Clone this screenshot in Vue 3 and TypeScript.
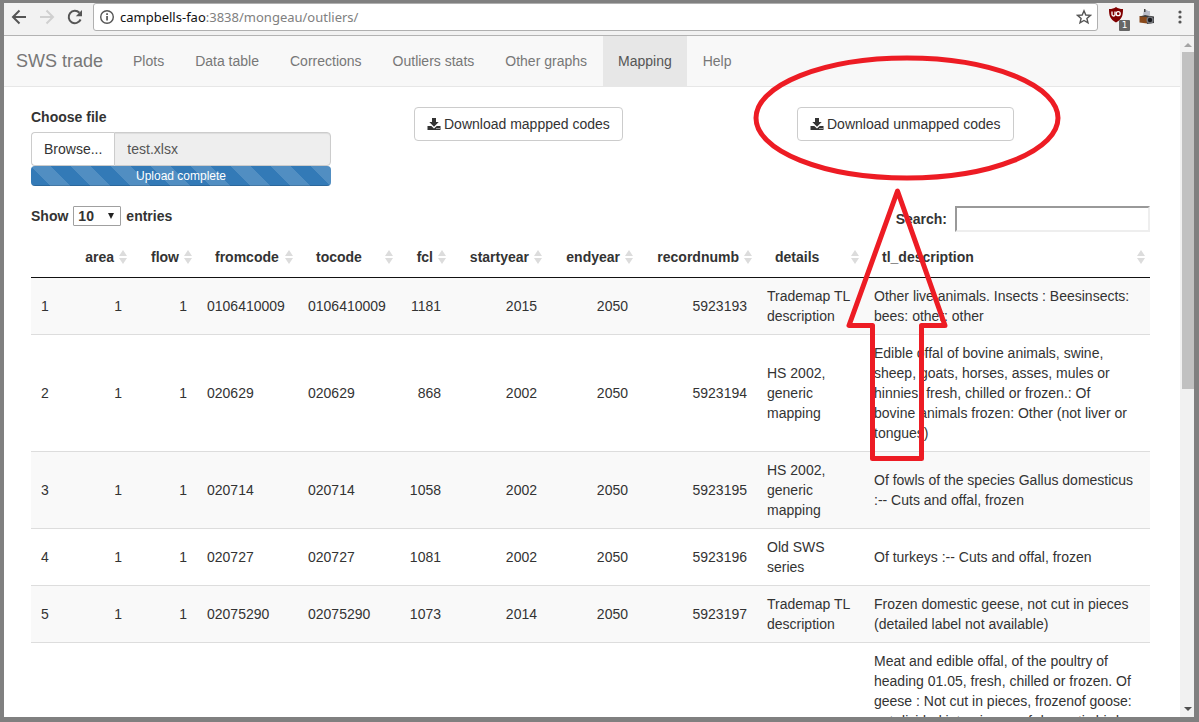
<script setup lang="ts">
import { ref } from 'vue'

interface Column {
  key: string
  width: number
  numeric?: boolean
}

interface Row {
  id: string
  cells: string[]
}

const navItems = ['Plots', 'Data table', 'Corrections', 'Outliers stats', 'Other graphs', 'Mapping', 'Help']
const active = ref('Mapping')
const pageSize = ref('10')
const search = ref('')
const progress = ref(100)

const columns: Column[] = [
  { key: 'area', width: 65, numeric: true },
  { key: 'flow', width: 65, numeric: true },
  { key: 'fromcode', width: 101 },
  { key: 'tocode', width: 100 },
  { key: 'fcl', width: 53, numeric: true },
  { key: 'startyear', width: 96, numeric: true },
  { key: 'endyear', width: 91, numeric: true },
  { key: 'recordnumb', width: 119, numeric: true },
  { key: 'details', width: 107 },
  { key: 'tl_description', width: 0 },
]

const rows: Row[] = [
  { id: '1', cells: ['1', '1', '0106410009', '0106410009', '1181', '2015', '2050', '5923193', 'Trademap TL description', 'Other live animals. Insects : Beesinsects: bees: other: other'] },
  { id: '2', cells: ['1', '1', '020629', '020629', '868', '2002', '2050', '5923194', 'HS 2002, generic mapping', 'Edible offal of bovine animals, swine, sheep, goats, horses, asses, mules or hinnies, fresh, chilled or frozen.: Of\nbovine animals frozen: Other (not liver or tongues)'] },
  { id: '3', cells: ['1', '1', '020714', '020714', '1058', '2002', '2050', '5923195', 'HS 2002, generic mapping', 'Of fowls of the species Gallus domesticus :-- Cuts and offal, frozen'] },
  { id: '4', cells: ['1', '1', '020727', '020727', '1081', '2002', '2050', '5923196', 'Old SWS series', 'Of turkeys :-- Cuts and offal, frozen'] },
  { id: '5', cells: ['1', '1', '02075290', '02075290', '1073', '2014', '2050', '5923197', 'Trademap TL description', 'Frozen domestic geese, not cut in pieces (detailed label not available)'] },
  { id: '', cells: ['', '', '', '', '', '', '', '', '', 'Meat and edible offal, of the poultry of heading 01.05, fresh, chilled or frozen. Of geese : Not cut in pieces, frozenof goose: not divided into pieces, of domestic bird'] },
]
</script>

<template>
  <div class="frame">
    <div class="toolbar">
      <button class="tool" type="button" aria-label="Back">
        <svg width="16" height="16" viewBox="0 0 16 16"><path d="M15 8H2.500M8.500 1.500 2 8l6.500 6.500" fill="none" stroke="#555" stroke-width="2" /></svg>
      </button>
      <button class="tool" type="button" aria-label="Forward" disabled>
        <svg width="16" height="16" viewBox="0 0 16 16"><path d="M1 8h12.500M7.500 1.500 14 8l-6.500 6.500" fill="none" stroke="#d0d0d0" stroke-width="2" /></svg>
      </button>
      <button class="tool" type="button" aria-label="Reload">
        <svg width="16" height="16" viewBox="0 0 16 16"><path d="M13.600 10.500A6.200 6.200 0 1 1 12.400 3.700" fill="none" stroke="#555" stroke-width="2" /><path d="M15 1v6.200H8.800z" fill="#555" /></svg>
      </button>
      <div class="address">
        <svg width="16" height="16" viewBox="0 0 16 16"><circle cx="8" cy="8" r="6.300" fill="none" stroke="#555" stroke-width="1.400" /><path d="M7.200 7h1.700v4.600H7.200zM7.200 4.200h1.700v1.700H7.200z" fill="#555" /></svg>
        <span class="url"><span class="host">campbells-fao</span>:3838/mongeau/outliers/</span>
        <button class="tool" type="button" aria-label="Bookmark this page">
          <svg width="16" height="16" viewBox="0 0 16 16"><path d="M8 1.800 9.800 6l4.600.4-3.500 3 1.100 4.500L8 11.500l-4 2.400 1.100-4.500-3.500-3L6.200 6z" fill="none" stroke="#555" stroke-width="1.400" /></svg>
        </button>
      </div>
      <div class="extensions">
        <button class="tool shield" type="button" aria-label="Blocker, 1 item">
          <svg width="22" height="24" viewBox="0 0 22 24"><path d="M1 4C4 4 6 3.500 8 2c2 1.500 4 2 7 2 0 7-1 10-7 13.500C2 14 1 11 1 4z" fill="#800000" /><path d="M4 6.500v3q0 1.500 1.500 1.500T7 9.500v-3" fill="none" stroke="#fff" stroke-width="1.300" /><circle cx="10.200" cy="8.700" r="2" fill="none" stroke="#fff" stroke-width="1.300" /></svg>
          <span class="badge">1</span>
        </button>
        <button class="tool" type="button" aria-label="Screenshot">
          <svg width="16" height="18" viewBox="0 0 16 18"><path d="M4 7 5 2h3l1 1h2v4z" fill="#b9bcc8" /><path d="M5 1h1.500v3H5z" fill="#444" /><path d="M.5 8H8v7.500L.5 14.500z" fill="#8a4a1c" /><path d="M.5 8.500 6 7l9 1.500v6.500l-7 1V9z" fill="#3c3c3e" /><circle cx="11" cy="12" r="3.600" fill="#77797e" /><circle cx="11" cy="12" r="2.200" fill="#1b1c20" /></svg>
        </button>
        <button class="tool menu" type="button" aria-label="Menu">
          <svg width="4" height="14" viewBox="0 0 4 14"><circle cx="2" cy="2" r="1.600" fill="#555" /><circle cx="2" cy="7" r="1.600" fill="#555" /><circle cx="2" cy="12" r="1.600" fill="#555" /></svg>
        </button>
      </div>
    </div>

    <div class="viewport">
      <div class="page">
        <nav class="navbar">
          <a class="brand" href="#">SWS trade</a>
          <div class="nav-links">
            <a v-for="item in navItems" :key="item" href="#" :class="['nav-link', { active: item === active }]" @click.prevent="active = item">{{ item }}</a>
          </div>
        </nav>

        <div class="controls">
          <div class="upload">
            <label class="field-label" for="file-name">Choose file</label>
            <div class="file-group">
              <button class="browse" type="button">Browse...</button>
              <input id="file-name" class="file-name" type="text" value="test.xlsx" readonly />
            </div>
            <div class="progress"><div class="bar" :style="{ width: progress + '%' }">Upload complete</div></div>
          </div>
          <div v-for="kind in ['mappped', 'unmapped']" :key="kind">
            <button class="download" type="button">
              <svg width="14" height="14" viewBox="0 0 14 14"><path d="M5 1h4v4h2.700L7 9.700 2.300 5H5z" fill="#333" /><path d="M.5 9h3.800L7 11.500 9.700 9h3.800v4H.5z" fill="#333" /><path d="M9.500 11h1v1h-1zM11.500 11h1v1h-1z" fill="#fff" /></svg>
              Download {{ kind }} codes
            </button>
          </div>
        </div>

        <div class="filters">
          <label class="length">Show
            <span class="select-wrap">
              <select v-model="pageSize"><option>10</option><option>25</option><option>50</option></select>
              <svg class="caret" width="6" height="6" viewBox="0 0 6 6"><path d="M0 0h6L3 6z" fill="#222" /></svg>
            </span>
            entries</label>
          <label class="search">Search:<input v-model="search" type="search" /></label>
        </div>

        <div class="table-area">
          <table>
            <colgroup>
              <col class="col-id" />
              <col v-for="c in columns" :key="c.key" :style="{ width: c.width ? c.width + 'px' : 'auto' }" />
            </colgroup>
            <thead>
              <tr>
                <th></th>
                <th v-for="c in columns" :key="c.key" :class="{ num: c.numeric }">
                  {{ c.key }}
                  <svg class="sort" width="8" height="14" viewBox="0 0 8 14"><path d="M4 0l4 6H0zM0 8h8l-4 6z" fill="#dcdcdc" /></svg>
                </th>
              </tr>
            </thead>
            <tbody>
              <tr v-for="r in rows" :key="r.id">
                <td>{{ r.id }}</td>
                <td v-for="(cell, i) in r.cells" :key="i" :class="{ num: columns[i].numeric }">{{ cell }}</td>
              </tr>
            </tbody>
          </table>
        </div>
      </div>

      <div class="scrollbar">
        <svg width="8" height="16" viewBox="0 0 8 16"><path d="M0 11l4-4 4 4z" fill="#a3a3a3" /></svg>
        <div class="track"><div class="thumb"></div></div>
        <svg width="8" height="16" viewBox="0 0 8 16"><path d="M0 6h8l-4 4z" fill="#505050" /></svg>
      </div>
    </div>

    <svg class="markup" width="310" height="410" viewBox="752 54 310 410" fill="none" stroke="#ed1c24" stroke-width="5">
      <ellipse cx="907" cy="118" rx="151" ry="60" />
      <path d="M897.500 191 849 325.500h23.500v133h49v-133H945z" stroke-linejoin="round" />
    </svg>
  </div>
</template>

<style>
html,
body {
  margin: 0;
  height: 100%;
}
#app {
  height: 100%;
}
</style>

<style scoped>
* {
  box-sizing: border-box;
}
.frame {
  position: relative;
  display: flex;
  flex-direction: column;
  height: 100vh;
  padding: 3px 5px 5px 4px;
  overflow: hidden;
  background: #808080;
  color: #333;
  font: 14px/20px "Liberation Sans", Arial, sans-serif;
}
svg {
  display: block;
  flex: none;
}
button,
input,
select {
  font: inherit;
  color: inherit;
}
.toolbar {
  display: flex;
  flex: none;
  align-items: center;
  gap: 12px;
  height: 33px;
  padding: 0 12px 4px 7px;
  border-bottom: 1px solid #b3b3b3;
  background: #f2f2f2;
}
.tool {
  flex: none;
  padding: 0;
  border: 0;
  background: none;
}
.address {
  display: flex;
  flex: 1;
  align-items: center;
  height: 28px;
  margin: 0 -2px;
  padding: 0 5px;
  border: 1px solid #b0b0b0;
  border-radius: 3px;
  background: #fff;
}
.url {
  flex: 1;
  margin-left: 5px;
  color: #808080;
  font-family: "Noto Sans", sans-serif;
  font-size: 13px;
}
.host {
  color: #111;
}
.extensions {
  display: flex;
  align-items: center;
  gap: 9px;
}
.menu {
  margin-left: 14px;
}
.shield {
  position: relative;
}
.badge {
  position: absolute;
  right: 0;
  bottom: -2px;
  width: 11px;
  height: 11px;
  border-radius: 1px;
  background: #666;
  color: #fff;
  font: 9px/11px "DejaVu Sans", sans-serif;
}
.viewport {
  display: flex;
  flex: 1;
  min-height: 0;
}
.page {
  flex: 1;
  min-width: 0;
  overflow: hidden;
  background: #fff;
}
.navbar {
  display: flex;
  height: 51px;
  padding-left: 12px;
  border-bottom: 1px solid #e7e7e7;
  background: #f8f8f8;
}
.navbar a {
  color: #777;
  text-decoration: none;
  white-space: nowrap;
}
.brand {
  padding: 15px 15px 15px 0;
  font-size: 18px;
}
.nav-links {
  display: flex;
  gap: 1px;
}
.nav-link {
  padding: 15px;
}
.navbar .active {
  background: #e7e7e7;
  color: #555;
}
.controls {
  display: grid;
  grid-template-columns: repeat(3, 1fr);
  padding: 20px 0 0 27px;
}
.upload {
  width: 300px;
}
.field-label {
  display: block;
  margin-bottom: 5px;
  font-weight: bold;
}
.file-group {
  display: flex;
  height: 34px;
}
.browse {
  padding: 0 12px;
  border: 1px solid #ccc;
  border-right: 0;
  border-radius: 4px 0 0 4px;
  background: #fff;
}
.file-name {
  flex: 1;
  min-width: 0;
  padding: 0 12px;
  border: 1px solid #ccc;
  border-radius: 0 4px 4px 0;
  outline: 0;
  background: #eee;
  color: #555;
  box-shadow: inset 0 1px 1px rgba(0, 0, 0, 0.075);
}
.progress {
  height: 20px;
  overflow: hidden;
  border-radius: 4px;
  background: #f5f5f5;
}
.bar {
  height: 100%;
  background: linear-gradient(45deg, rgba(255, 255, 255, 0.15) 25%, transparent 25%, transparent 50%, rgba(255, 255, 255, 0.15) 50%, rgba(255, 255, 255, 0.15) 75%, transparent 75%) 0 0 / 40px 40px #337ab7;
  box-shadow: inset 0 -1px 0 rgba(0, 0, 0, 0.15);
  color: #fff;
  font-size: 12px;
  text-align: center;
}
.download {
  display: flex;
  align-items: center;
  gap: 3px;
  height: 34px;
  padding: 0 12px;
  border: 1px solid #ccc;
  border-radius: 4px;
  background: #fff;
}
.filters {
  display: flex;
  align-items: flex-start;
  justify-content: space-between;
  padding: 20px 30px 0 27px;
  font-weight: bold;
}
.length {
  display: flex;
  align-items: center;
  gap: 5px;
}
.select-wrap {
  position: relative;
}
.select-wrap select {
  display: block;
  width: 48px;
  height: 20px;
  padding: 0 4px;
  border: 1px solid #a0a0a0;
  border-radius: 1px;
  appearance: none;
  background: #fff;
  line-height: 18px;
}
.caret {
  position: absolute;
  top: 7px;
  right: 7px;
}
.search {
  display: flex;
  align-items: center;
  gap: 8px;
}
.search input {
  width: 195px;
  height: 26px;
  border: 2px solid;
  border-color: #999 #eee #eee #999;
  background: #fff;
  outline: 0;
}
.table-area {
  padding: 5px 30px 0 27px;
}
table {
  width: 100%;
  border-collapse: separate;
  border-spacing: 0;
  table-layout: fixed;
}
.col-id {
  width: 36px;
}
th {
  position: relative;
  height: 41px;
  padding: 10px 18px;
  border-bottom: 1px solid #111;
  text-align: left;
  white-space: nowrap;
}
.sort {
  position: absolute;
  top: 13px;
  right: 5px;
}
td {
  padding: 8px 10px;
  border-bottom: 1px solid #ddd;
  text-align: left;
  vertical-align: middle;
  white-space: pre-line;
}
.num {
  text-align: right;
}
tbody tr:nth-child(odd) {
  background: #f9f9f9;
}
.scrollbar {
  display: flex;
  flex-direction: column;
  align-items: center;
  width: 14px;
  padding-left: 2px;
  background: #f1f1f1;
}
.track {
  flex: 1;
  width: 100%;
}
.thumb {
  height: 52%;
  background: #c1c1c1;
}
.markup {
  position: absolute;
  top: 54px;
  left: 752px;
  pointer-events: none;
}
</style>
